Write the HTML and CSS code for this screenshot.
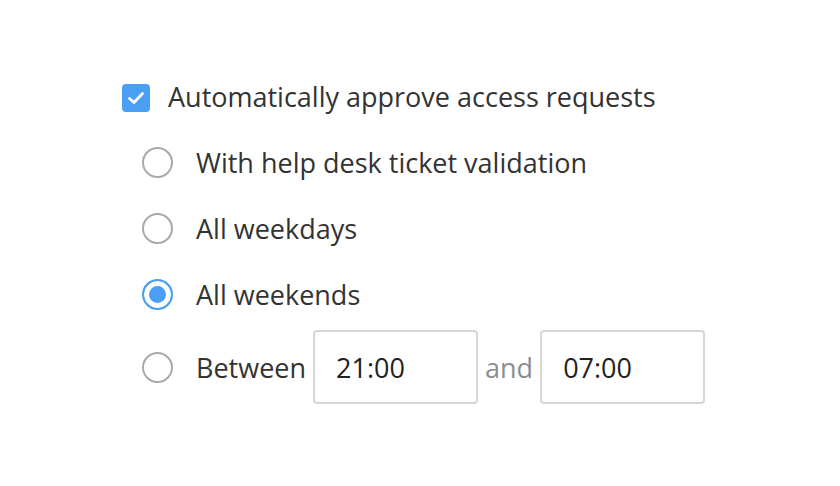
FILE: index.html
```html
<!DOCTYPE html>
<html lang="en">
<head>
    <meta charset="UTF-8">
    <meta name="viewport" content="width=device-width, initial-scale=1.0">
    <title>Access requests</title>
    <link rel="stylesheet" href="styles.css">
</head>
<body>
    <div class="settings">
        <label class="check-row">
            <input type="checkbox" checked>
            <span class="check-box">
                <svg width="28" height="28" viewBox="0 0 28 28"><path d="M7.5 14.5 L12 18.5 L20.5 9.5" fill="none" stroke="#fff" stroke-width="2.8" stroke-linecap="round" stroke-linejoin="round"/></svg>
            </span>
            <span class="check-text">Automatically approve access requests</span>
        </label>
        <div class="radio-list">
            <label class="radio-row">
                <input type="radio" name="approve" value="ticket">
                <span class="radio-dot"></span>
                <span>With help desk ticket validation</span>
            </label>
            <label class="radio-row">
                <input type="radio" name="approve" value="weekdays">
                <span class="radio-dot"></span>
                <span>All weekdays</span>
            </label>
            <label class="radio-row">
                <input type="radio" name="approve" value="weekends" checked>
                <span class="radio-dot"></span>
                <span>All weekends</span>
            </label>
            <div class="radio-row time-row">
                <label class="radio-label">
                    <input type="radio" name="approve" value="between">
                    <span class="radio-dot"></span>
                    <span>Between</span>
                </label>
                <input class="time-input" type="text" value="21:00">
                <span class="and">and</span>
                <input class="time-input" type="text" value="07:00">
            </div>
        </div>
    </div>
</body>
</html>
```

FILE: styles.css
```css
body, html {
    margin: 0;
    background-color: #fff;
}
.settings {
    font-family: "Open Sans", sans-serif;
    font-size: 27px;
    color: #333;
    padding: 84px 0 0 122px;
}
input[type="radio"], input[type="checkbox"] {
    display: none;
}
.check-row {
    display: flex;
    align-items: center;
    height: 28px;
    cursor: pointer;
}
.check-box {
    width: 28px;
    height: 28px;
    border-radius: 4px;
    background-color: #4a9ff5;
    display: flex;
    align-items: center;
    justify-content: center;
    margin-right: 18px;
}
.check-text {
    margin-top: -4px;
}
.radio-list {
    margin-top: 17px;
    margin-left: 20px;
}
.radio-row {
    display: flex;
    align-items: center;
    height: 66px;
    cursor: pointer;
}
.radio-label {
    display: flex;
    align-items: center;
    cursor: pointer;
}
.radio-dot {
    box-sizing: border-box;
    width: 31px;
    height: 31px;
    border-radius: 50%;
    border: 2px solid #a9a9a9;
    margin-right: 23px;
    background-color: #fff;
}
input[type="radio"]:checked + .radio-dot {
    border-color: #4a9ff5;
    box-shadow: inset 0 0 0 5px #fff;
    background-color: #4a9ff5;
}
.time-row {
    height: 74px;
    margin-top: 3px;
}
.time-input {
    box-sizing: border-box;
    width: 165px;
    height: 74px;
    border: 2px solid #d6d6d6;
    border-radius: 4px;
    padding: 0 0 0 21px;
    font-family: "Open Sans", sans-serif;
    font-size: 27px;
    color: #222;
    margin-left: 7px;
}
.and {
    color: #8a8e90;
    margin-left: 7px;
}
```
